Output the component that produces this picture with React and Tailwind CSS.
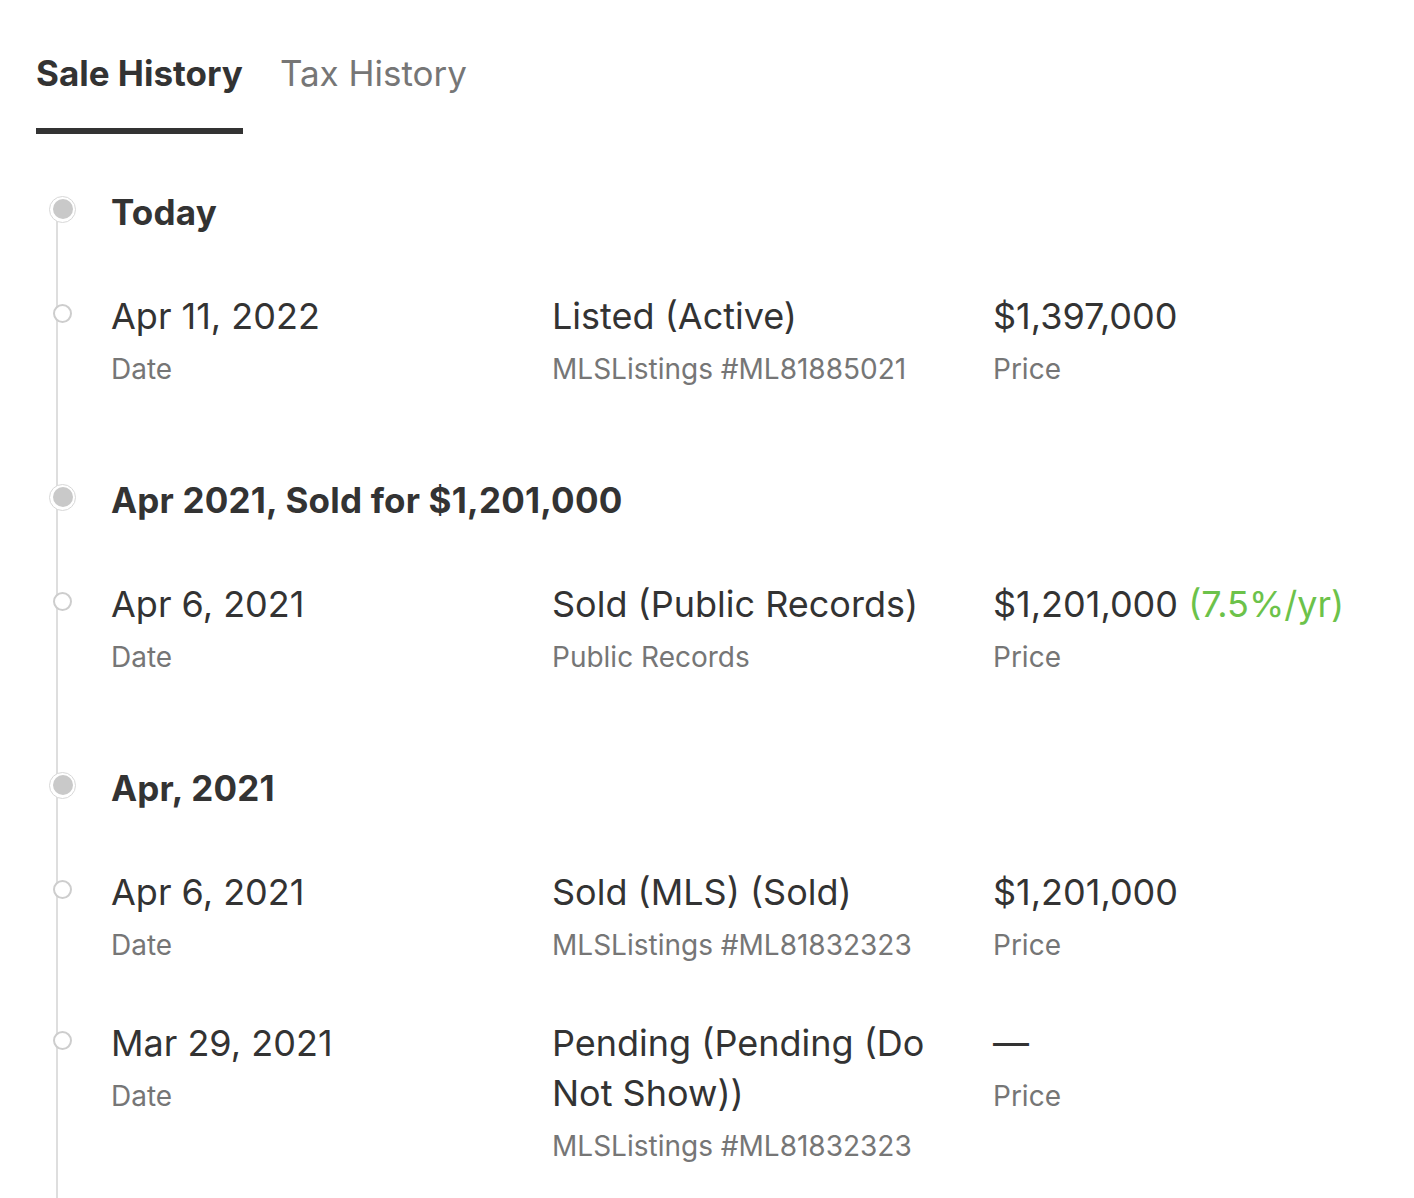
const GROUPS = [
  {
    title: 'Today',
    events: [
      { date: 'Apr 11, 2022', event: 'Listed (Active)', source: 'MLSListings #ML81885021', price: '$1,397,000' },
    ],
  },
  {
    title: 'Apr 2021, Sold for $1,201,000',
    events: [
      { date: 'Apr 6, 2021', event: 'Sold (Public Records)', source: 'Public Records', price: '$1,201,000', change: '(7.5%/yr)' },
    ],
  },
  {
    title: 'Apr, 2021',
    events: [
      { date: 'Apr 6, 2021', event: 'Sold (MLS) (Sold)', source: 'MLSListings #ML81832323', price: '$1,201,000' },
      { date: 'Mar 29, 2021', event: 'Pending (Pending (Do Not Show))', source: 'MLSListings #ML81832323', price: '—' },
    ],
  },
]

function GroupHeader({ title }) {
  return (
    <div className="flex items-center">
      <div className="w-[75px] shrink-0 flex">
        <span className="relative z-10 ml-[13px] -mt-[6px] w-[27px] h-[27px] rounded-full bg-white border border-[#d8d8d8] flex items-center justify-center">
          <span className="w-[20px] h-[20px] rounded-full bg-[#c9c9c9]" />
        </span>
      </div>
      <h3 className="text-[35px] leading-[40px] font-bold tracking-[0.2px] text-[#333]">{title}</h3>
    </div>
  )
}

function EventRow({ e }) {
  return (
    <div className="flex items-start">
      <div className="w-[75px] shrink-0 flex pt-[13px]">
        <span className="relative z-10 ml-[17px] w-[19px] h-[19px] rounded-full bg-white border-2 border-[#cdcdcd]" />
      </div>
      <div className="w-[441px] shrink-0 pr-4">
        <div className="text-[36px] leading-[50px] text-[#333]">{e.date}</div>
        <div className="mt-[10px] text-[28px] leading-[36px] text-[#767676]">Date</div>
      </div>
      <div className="w-[441px] shrink-0 pr-[60px]">
        <div className="text-[36px] leading-[50px] text-[#333]">{e.event}</div>
        <div className="mt-[10px] text-[28px] leading-[36px] text-[#767676]">{e.source}</div>
      </div>
      <div className="flex-1">
        <div className="text-[36px] leading-[50px] text-[#333] whitespace-nowrap">
          {e.price}
          {e.change && <span className="text-[#6cc24a]"> {e.change}</span>}
        </div>
        <div className="mt-[10px] text-[28px] leading-[36px] text-[#767676]">Price</div>
      </div>
    </div>
  )
}

export default function App() {
  return (
    <div className="w-[1414px] h-[1198px] overflow-hidden bg-white flex flex-col" style={{ fontFamily: 'Inter, "Noto Sans", sans-serif' }}>
      {/* tabs */}
      <div className="flex gap-[37px] pl-[36px] pt-[52px]">
        <div className="border-b-[6px] border-[#333] pb-[34px]">
          <span className="text-[35px] leading-[42px] font-bold text-[#333]">Sale History</span>
        </div>
        <div className="pb-[34px]">
          <span className="text-[35px] leading-[42px] text-[#767676]">Tax History</span>
        </div>
      </div>

      {/* timeline */}
      <div className="relative flex-1 pl-[36px] pt-[58px]">
        <div className="absolute left-[56px] top-[80px] bottom-0 w-[2px] bg-[#dedede]" />
        <div className="flex flex-col">
          {GROUPS.map((g, gi) => (
            <div key={gi} className={gi > 0 ? 'mt-[93px]' : ''}>
              <GroupHeader title={g.title} />
              <div className="mt-[59px] flex flex-col gap-[55px]">
                {g.events.map((e, i) => <EventRow key={i} e={e} />)}
              </div>
            </div>
          ))}
        </div>
      </div>
    </div>
  )
}
